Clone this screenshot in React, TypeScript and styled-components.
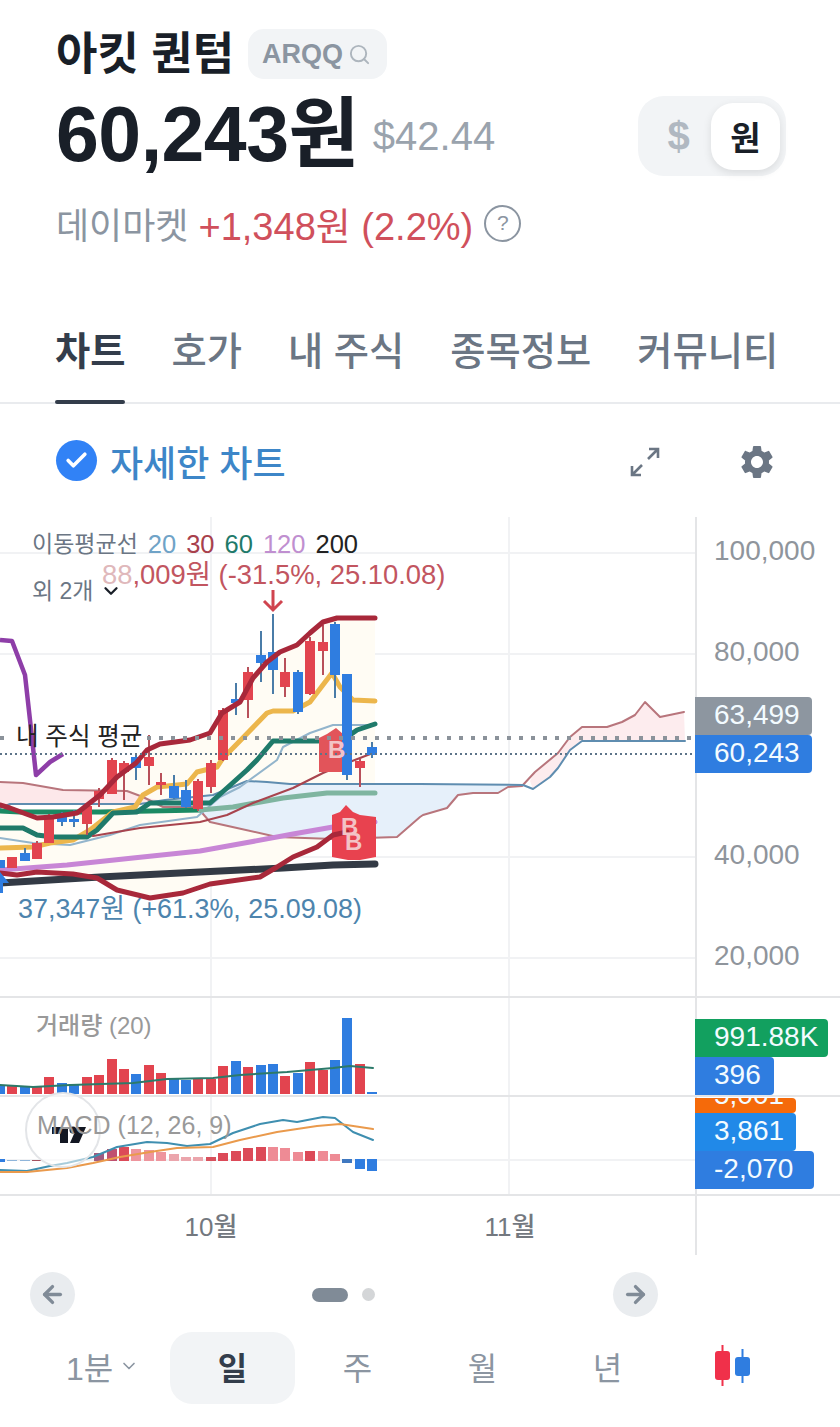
import * as React from 'react';
import styled, { createGlobalStyle } from 'styled-components';
import { ArrowLeft, ArrowRight, Check, ChevronDown, Search } from 'lucide-react';
import { MdSettings } from 'react-icons/md';

const sans = `'Liberation Sans', 'Noto Sans CJK KR', sans-serif`;
const RED = '#e2444f';
const BLUE = '#2f7de0';

const GlobalStyle = createGlobalStyle`
  html, body {
    margin: 0;
    padding: 0;
    background: #fff;
    font-family: ${sans};
  }
`;

const Page = styled.div`
  width: 840px;
  height: 1427px;
  overflow: hidden;
  background: #fff;
`;

const Header = styled.header`
  height: 276px;
  padding: 27px 54px 0 56px;
  box-sizing: border-box;
`;

const TitleRow = styled.div`
  display: flex;
  align-items: center;
  gap: 14px;
  height: 54px;
`;

const Title = styled.h1`
  margin: 2px 0 0;
  font-size: 45px;
  font-weight: 700;
  line-height: 54px;
  color: #191f28;
`;

const TickerPill = styled.div`
  display: flex;
  align-items: center;
  gap: 5px;
  height: 50px;
  padding: 0 16px 0 14px;
  border-radius: 16px;
  background: #f2f4f6;
  color: #8b95a1;
  font-size: 27px;
  font-weight: 700;
  svg {
    color: #adb5bd;
  }
`;

const PriceRow = styled.div`
  display: flex;
  align-items: center;
  height: 80px;
  margin-top: 15px;
`;

const Price = styled.div`
  font-size: 77px;
  font-weight: 700;
  letter-spacing: -0.5px;
  line-height: 80px;
  color: #191f28;
  margin: 0 14px 4px 0;
`;

const UsdPrice = styled.div`
  font-size: 40px;
  color: #9aa3ad;
`;

const CurrencyToggle = styled.div`
  display: flex;
  align-items: center;
  margin-left: auto;
  width: 148px;
  height: 80px;
  padding: 0 6px 0 8px;
  box-sizing: border-box;
  border-radius: 26px;
  background: #f2f4f6;
`;

const CurrencyOption = styled.div<{ $active?: boolean }>`
  display: flex;
  align-items: center;
  justify-content: center;
  width: ${(p) => (p.$active ? '69px' : '65px')};
  height: 67px;
  border-radius: 22px;
  font-weight: 700;
  font-size: ${(p) => (p.$active ? '33px' : '40px')};
  color: ${(p) => (p.$active ? '#191f28' : '#b0b8c1')};
  background: ${(p) => (p.$active ? '#fff' : 'transparent')};
  box-shadow: ${(p) => (p.$active ? '0 3px 8px rgba(0,0,0,0.10)' : 'none')};
`;

const ChangeRow = styled.div`
  display: flex;
  align-items: center;
  height: 40px;
  margin-top: 27px;
  font-size: 36px;
`;

const MarketName = styled.span`
  color: #8b95a1;
  margin-right: 10px;
`;

const ChangeValue = styled.span`
  color: #d0505c;
  font-size: 38px;
  margin-right: 11px;
`;

const HelpBadge = styled.span`
  display: flex;
  align-items: center;
  justify-content: center;
  width: 37px;
  height: 37px;
  box-sizing: border-box;
  border: 2.5px solid #8b95a1;
  border-radius: 50%;
  font-size: 21px;
  color: #8b95a1;
`;

const Tabs = styled.nav`
  display: flex;
  gap: 46px;
  height: 128px;
  padding: 0 0 0 55px;
  box-sizing: border-box;
  border-bottom: 2px solid #e9ebee;
`;

const Tab = styled.div<{ $active?: boolean }>`
  position: relative;
  display: flex;
  align-items: center;
  height: 126px;
  padding-top: 18px;
  box-sizing: border-box;
  font-size: 38.3px;
  font-weight: ${(p) => (p.$active ? 700 : 500)};
  color: ${(p) => (p.$active ? '#333d4b' : '#6b7684')};
  white-space: nowrap;
  &::after {
    content: '';
    display: ${(p) => (p.$active ? 'block' : 'none')};
    position: absolute;
    left: 0;
    right: 0;
    bottom: -2px;
    height: 4px;
    border-radius: 2px;
    background: #333d4b;
  }
`;

const Toolbar = styled.div`
  display: flex;
  align-items: center;
  height: 113px;
  padding: 0 63px 0 56px;
  box-sizing: border-box;
`;

const CheckBadge = styled.span`
  display: flex;
  align-items: center;
  justify-content: center;
  width: 41px;
  height: 41px;
  border-radius: 50%;
  background: #3182f6;
  color: #fff;
  margin-right: 13px;
`;

const ToolbarLabel = styled.span`
  font-size: 36px;
  font-weight: 500;
  color: #3d86c8;
`;

const ToolbarIcons = styled.div`
  display: flex;
  align-items: center;
  gap: 77px;
  margin-left: auto;
  padding-top: 2px;
  color: #6b7684;
`;

const Chart = styled.section`
  position: relative;
  height: 738px;
`;

const ChartSvg = styled.svg`
  display: block;
`;

const LegendRow = styled.div`
  position: absolute;
  left: 32px;
  top: 12px;
  display: flex;
  align-items: center;
  gap: 10px;
  font-size: 23px;
  line-height: 30px;
  color: #6b7684;
`;

const LegendValue = styled.span<{ $color: string }>`
  color: ${(p) => p.$color};
  font-size: 25.5px;
`;

const LegendMore = styled.div`
  position: absolute;
  left: 32px;
  top: 59px;
  display: flex;
  align-items: center;
  gap: 6px;
  font-size: 23px;
  line-height: 30px;
  color: #6b7684;
  svg {
    color: #191f28;
  }
`;

const HighLabel = styled.div`
  position: absolute;
  left: 102px;
  top: 42px;
  font-size: 27.4px;
  line-height: 32px;
  color: #c25560;
  white-space: nowrap;
`;

const FadedDigits = styled.span`
  color: #dfb8bb;
`;

const LowLabel = styled.div`
  position: absolute;
  left: 18px;
  top: 376px;
  font-size: 26.9px;
  line-height: 32px;
  color: #4d84ad;
  white-space: nowrap;
`;

const AverageLabel = styled.div`
  position: absolute;
  left: 16px;
  top: 205px;
  font-size: 24.5px;
  line-height: 30px;
  color: #222;
  white-space: nowrap;
`;

const BuyMark = styled.span<{ $left: number; $top: number }>`
  position: absolute;
  left: ${(p) => p.$left}px;
  top: ${(p) => p.$top}px;
  font-size: 24px;
  font-weight: 700;
  line-height: 28px;
  color: #f3c3c6;
`;

const PaneTitle = styled.div<{ $top: number; $left: number; $size: number }>`
  position: absolute;
  left: ${(p) => p.$left}px;
  top: ${(p) => p.$top}px;
  font-size: ${(p) => p.$size}px;
  line-height: 28px;
  font-weight: 500;
  color: #999;
  white-space: nowrap;
`;

const AxisLabel = styled.div<{ $top: number }>`
  position: absolute;
  left: 714px;
  top: ${(p) => p.$top}px;
  font-size: 28px;
  line-height: 34px;
  color: #8f959c;
`;

const PriceTag = styled.div<{ $top: number; $width: number; $height?: number; $bg: string }>`
  position: absolute;
  left: 695px;
  top: ${(p) => p.$top}px;
  width: ${(p) => p.$width}px;
  height: ${(p) => p.$height ?? 38}px;
  padding-left: 19px;
  box-sizing: border-box;
  overflow: hidden;
  border-radius: 0 4px 4px 0;
  background: ${(p) => p.$bg};
  color: #f3fbff;
  font-size: 28px;
  line-height: 36px;
`;

const ClippedValue = styled.div`
  margin-top: -21px;
`;

const DateLabel = styled.div<{ $left: number }>`
  position: absolute;
  left: ${(p) => p.$left}px;
  top: 694px;
  width: 80px;
  margin-left: -40px;
  text-align: center;
  font-size: 26px;
  line-height: 32px;
  font-weight: 500;
  color: #73787f;
`;

const PagerRow = styled.div`
  display: flex;
  align-items: center;
  justify-content: space-between;
  width: 628px;
  height: 77px;
  padding-top: 2px;
  box-sizing: border-box;
  margin-left: 30px;
`;

const PagerButton = styled.span`
  display: flex;
  align-items: center;
  justify-content: center;
  width: 45px;
  height: 45px;
  border-radius: 50%;
  background: #e9ecef;
  color: #808b97;
`;

const PagerDots = styled.div`
  display: flex;
  align-items: center;
  gap: 14px;
  margin-right: 2px;
`;

const PagerDot = styled.span<{ $active?: boolean }>`
  width: ${(p) => (p.$active ? '36px' : '13px')};
  height: ${(p) => (p.$active ? '14px' : '13px')};
  border-radius: 7px;
  background: ${(p) => (p.$active ? '#808b97' : '#d4d6d8')};
`;

const PeriodRow = styled.div`
  display: grid;
  grid-template-columns: repeat(6, 125px);
  height: 72px;
  padding-left: 45px;
`;

const PeriodButton = styled.div<{ $active?: boolean; $shift?: number }>`
  display: flex;
  align-items: center;
  justify-content: center;
  gap: 6px;
  padding: 0 ${(p) => p.$shift ?? 0}px 4px 0;
  border-radius: 22px;
  font-size: 32px;
  font-weight: ${(p) => (p.$active ? 700 : 400)};
  color: ${(p) => (p.$active ? '#333d4b' : '#8b95a1')};
  background: ${(p) => (p.$active ? '#f2f4f6' : 'transparent')};
`;

type Candle = [number, number, number, number, number, 'r' | 'b'];

// x, body top, body bottom, wick top, wick bottom, colour
const candles: Candle[] = [
  [0, 860, 868, 860, 868, 'b'],
  [12, 857, 868, 857, 868, 'r'],
  [25, 853, 861, 848, 861, 'b'],
  [37, 843, 859, 841, 859, 'r'],
  [49, 816, 843, 814, 843, 'r'],
  [62, 817, 822, 812, 826, 'b'],
  [74, 819, 822, 810, 827, 'b'],
  [87, 806, 824, 803, 835, 'r'],
  [99, 791, 799, 788, 807, 'r'],
  [112, 760, 794, 758, 794, 'r'],
  [124, 763, 772, 761, 800, 'r'],
  [136, 757, 768, 754, 780, 'b'],
  [149, 757, 766, 735, 785, 'r'],
  [161, 782, 785, 773, 795, 'r'],
  [174, 786, 798, 775, 799, 'b'],
  [186, 790, 807, 780, 808, 'b'],
  [198, 781, 809, 779, 811, 'r'],
  [211, 763, 787, 760, 793, 'r'],
  [223, 710, 760, 708, 761, 'r'],
  [236, 699, 703, 683, 715, 'b'],
  [248, 672, 700, 667, 718, 'r'],
  [261, 655, 663, 631, 682, 'b'],
  [273, 652, 670, 614, 694, 'b'],
  [285, 672, 687, 658, 697, 'r'],
  [298, 672, 712, 670, 714, 'b'],
  [310, 641, 694, 637, 695, 'r'],
  [323, 642, 651, 625, 675, 'r'],
  [335, 624, 675, 622, 698, 'b'],
  [347, 674, 775, 674, 780, 'b'],
  [360, 761, 768, 759, 787, 'r'],
  [372, 747, 755, 742, 758, 'b'],
];

// x, top
const volumes: [number, number, 'r' | 'b'][] = [
  [0, 1085, 'b'], [12, 1086, 'r'], [25, 1086, 'b'], [37, 1087, 'r'], [49, 1077, 'r'], [62, 1083, 'b'],
  [74, 1084, 'b'], [87, 1077, 'r'], [99, 1075, 'r'], [112, 1059, 'r'], [124, 1069, 'r'], [136, 1074, 'b'],
  [149, 1065, 'r'], [161, 1073, 'r'], [174, 1079, 'b'], [186, 1080, 'b'], [198, 1079, 'r'], [211, 1079, 'r'],
  [223, 1066, 'r'], [236, 1061, 'b'], [248, 1067, 'r'], [261, 1065, 'b'], [273, 1064, 'b'], [285, 1076, 'r'],
  [298, 1073, 'b'], [310, 1062, 'r'], [323, 1070, 'r'], [335, 1060, 'b'], [347, 1018, 'b'], [360, 1064, 'r'],
  [372, 1092, 'b'],
];

// x, top, bottom, colour
const macdBars: [number, number, number, string][] = [
  [0, 1159, 1162, '#2f7de0'], [12, 1160, 1161, '#8fb5da'], [25, 1160, 1161, '#8fb5da'], [37, 1160, 1161, '#a5525f'],
  [99, 1153, 1161, '#a05a80'], [112, 1149, 1161, '#c05070'], [124, 1147, 1161, '#dc4a58'], [136, 1149, 1161, '#ee959d'],
  [149, 1150, 1161, '#ee959d'], [161, 1152, 1161, '#ee959d'], [174, 1154, 1161, '#eba5ac'], [186, 1157, 1161, '#eba5ac'],
  [198, 1157, 1161, '#eba5ac'], [211, 1157, 1161, '#d8505c'], [223, 1153, 1161, '#dc4a58'], [236, 1151, 1161, '#dc4a58'],
  [248, 1148, 1161, '#dc4a58'], [261, 1147, 1161, '#dc4a58'], [273, 1147, 1161, '#ee8b95'], [285, 1148, 1161, '#ee8b95'],
  [298, 1152, 1161, '#ee8b95'], [310, 1151, 1161, '#dc4a58'], [323, 1151, 1161, '#ee8b95'], [335, 1154, 1161, '#ee8b95'],
  [347, 1159, 1163, '#3f78c0'], [360, 1159, 1169, BLUE], [372, 1159, 1171, BLUE],
];

const crimsonUpper = '0,805 10,808 37,818 53,817 77,813 100,795 117,777 136,763 147,750 160,744 190,740 210,733 222,713 240,702 253,678 267,662 280,652 297,645 310,633 323,622 337,618 375,618';
const crimsonLower = '0,873 17,875 37,872 73,874 97,878 117,890 150,898 183,893 210,884 260,877 277,867 293,857 317,847 333,835 347,832';
const crimsonThin = '93,836 140,828 200,822 227,815 253,803 293,788 323,773 347,763 373,753';
const blackLine = '0,883 100,877 200,872 283,868 333,865 375,864';
const violetLine = '0,870 67,865 133,858 200,851 250,842 293,834 333,827 375,822';
const yellowLine = '0,848 33,847 50,843 73,840 90,830 113,812 135,807 143,795 157,787 187,784 197,772 217,767 223,758 233,748 267,713 273,711 293,711 310,702 332,673 340,687 353,700 375,701';
const tealLine = '0,828 23,828 37,835 53,837 87,837 97,830 113,813 137,812 150,803 210,803 227,788 247,770 257,760 273,741 317,741 343,740 357,730 375,724';
const greenLine = '0,811 20,812 100,812 200,810';
const paleGreenLine = '200,810 233,807 283,798 327,793 375,793';
const cloudBlue = '0,808 10,804 140,804 165,800 213,795 247,781 267,782 290,784 420,784 523,785 533,789 550,777 558,768 570,750 582,741 685,741';
const skyLine = '0,838 33,843 70,845 110,835 140,825 197,817 220,797 240,787 277,760 283,747 310,733 333,725 367,725';
const cloudPink = '0,782 23,783 63,790 127,791 143,797 163,807 197,807 210,822 237,828 277,837 333,839 397,837 420,817 423,815 447,808 458,795 473,793 498,793 508,787 522,786 535,772 558,753 570,737 582,727 607,727 622,722 635,715 645,702 660,717 684,712';

const volumeAverage = '0,1085 33,1087 70,1085 133,1083 167,1079 213,1078 240,1075 287,1072 333,1068 350,1066 373,1068';
const macdLine = '0,1170 27,1171 50,1166 67,1163 93,1157 117,1147 147,1142 167,1143 187,1146 210,1144 233,1133 260,1124 283,1120 297,1122 323,1117 335,1118 353,1132 373,1140';
const signalLine = '0,1172 27,1172 67,1168 93,1163 120,1157 150,1152 177,1148 213,1147 240,1140 277,1132 317,1126 340,1124 373,1129';

function Line({ points, color, width = 2 }: { points: string; color: string; width?: number }) {
  return (
    <polyline
      points={points}
      fill='none'
      stroke={color}
      strokeWidth={width}
      strokeLinecap='round'
      strokeLinejoin='round'
    />
  );
}

function ChartDrawing() {
  return (
    <ChartSvg width={840} height={738} viewBox='0 517 840 738'>
      {/* grid */}
      {[553, 654, 857, 958].map((y) => (
        <line key={y} x1={0} x2={696} y1={y} y2={y} stroke='#f1f2f4' strokeWidth={2} />
      ))}
      <line x1={0} x2={696} y1={1160} y2={1160} stroke='#f1f2f4' strokeWidth={2} />
      {[211, 509].map((x) => (
        <line key={x} x1={x} x2={x} y1={517} y2={1195} stroke='#f1f2f4' strokeWidth={2} />
      ))}
      {[997, 1096, 1195].map((y) => (
        <line key={y} x1={0} x2={840} y1={y} y2={y} stroke='#e4e5e7' strokeWidth={2} />
      ))}
      <line x1={696} x2={696} y1={517} y2={1255} stroke='#e4e5e7' strokeWidth={2} />

      {/* band and cloud fills */}
      <polygon points={`${crimsonUpper} 375,864 347,832 ${crimsonLower.split(' ').reverse().join(' ')}`} fill='#fffcf4' />
      <polygon points='0,782 23,783 63,790 127,791 143,797 163,801 140,804 10,804 0,808' fill='#fde8ea' />
      <polygon points='200,796 213,795 247,781 267,782 290,784 523,785 508,787 498,793 473,793 458,795 447,808 423,815 420,817 397,837 333,839 277,837 237,828 210,822 197,807' fill='#e6f0fa' />
      <polygon points='530,781 535,772 558,753 570,737 582,727 607,727 622,722 635,715 645,702 660,717 684,712 685,741 582,741 570,750 558,768 550,777 533,789' fill='#fdecee' />

      {/* indicator lines */}
      <Line points={cloudPink} color='#b8757c' />
      <Line points={cloudBlue} color='#5f8db0' />
      <Line points={skyLine} color='#93b5cc' />
      <Line points={blackLine} color='#333a45' width={7} />
      <Line points={violetLine} color='#c886d6' width={5} />
      <Line points={greenLine} color='#1b8a63' width={5} />
      <Line points={paleGreenLine} color='#7fb5a0' width={5} />
      <Line points={yellowLine} color='#ecb64c' width={5} />
      <Line points={tealLine} color='#1f7a6a' width={5} />
      <Line points={crimsonThin} color='#a8444e' />
      <polyline points='0,640 12,641 25,675 30,720 36,775 50,762 63,754' fill='none' stroke='#8e3ea8' strokeWidth={4.5} strokeLinejoin='round' />

      {/* buy markers */}
      <path d='M319 772V738l8-4 9-6 7 6V772Z' fill='#e2545a' />
      <path d='M332 857V815l8-3 6-7 7 7 7 3 16 2V857l-16 3h-12Z' fill='#e8424f' />

      {/* candles */}
      {candles.map(([x, top, bottom, wickTop, wickBottom, side]) => {
        const color = side === 'r' ? RED : BLUE;
        return (
          <g key={x}>
            <line x1={x} x2={x} y1={wickTop} y2={wickBottom} stroke={side === 'r' ? '#b8505a' : '#4a7ca8'} strokeWidth={2} />
            <rect x={x - 5} y={top} width={10} height={bottom - top} fill={color} />
          </g>
        );
      })}

      <Line points={crimsonUpper} color='#a8283a' width={5} />
      <Line points={crimsonLower} color='#a8283a' width={5} />

      {/* price lines, the average line stops behind its label */}
      <line x1={0} x2={8} y1={738} y2={738} stroke='#8b929a' strokeWidth={4} strokeDasharray='4 8' />
      <line x1={147} x2={696} y1={738} y2={738} stroke='#8b929a' strokeWidth={4} strokeDasharray='4 8' />
      <line x1={0} x2={694} y1={754} y2={754} stroke='#5d7489' strokeWidth={2} strokeDasharray='2 3' />

      {/* high and low arrows */}
      <path d='M273 590V609M264 601l9 9 9-9' fill='none' stroke='#d0444f' strokeWidth={3} />
      <path d='M0 872l9 11H3V893H0Z' fill='#2f7de0' />

      {/* volume pane */}
      {volumes.map(([x, top, side]) => (
        <rect key={x} x={x - 5} y={top} width={10} height={1094 - top} fill={side === 'r' ? RED : BLUE} />
      ))}
      <Line points={volumeAverage} color='#2c7a6a' />

      {/* macd pane */}
      {macdBars.map(([x, top, bottom, color]) => (
        <rect key={x} x={x - 5} y={top} width={10} height={bottom - top} fill={color} />
      ))}
      <Line points={macdLine} color='#3f8fb0' />
      <Line points={signalLine} color='#ea9a4c' />

      {/* watermark logo */}
      <circle cx={63} cy={1130} r={37} fill='rgba(255,255,255,0.55)' stroke='#e3e5e8' strokeWidth={2} />
      <path d='M52 1127H68V1143H60V1134H52Z' fill='#131722' />
      <circle cx={73} cy={1130} r={3.5} fill='#131722' />
      <path d='M77 1127H86L79 1143H70Z' fill='#131722' />
    </ChartSvg>
  );
}

function ExpandIcon() {
  return (
    <svg width={30} height={30} viewBox='0 0 30 30' fill='none' stroke='#6b7684' strokeWidth={2.6}>
      <path d='M18 12 28 2M19 2H28V11' />
      <path d='M12 18 2 28M2 19V28H11' />
    </svg>
  );
}

function CandleIcon() {
  return (
    <svg width={38} height={42} viewBox='0 0 38 42'>
      <rect x={7.5} y={0} width={2} height={41} fill='#f0304a' />
      <rect x={1} y={6} width={15} height={29} rx={3} fill='#f0304a' />
      <rect x={27.5} y={4} width={2} height={34} fill='#2f7de0' />
      <rect x={21} y={12} width={15} height={19} rx={3} fill='#2f7de0' />
    </svg>
  );
}

export default function App() {
  return (
    <Page>
      <GlobalStyle />
      <Header>
        <TitleRow>
          <Title>아킷 퀀텀</Title>
          <TickerPill>
            ARQQ
            <Search size={23} strokeWidth={2} />
          </TickerPill>
        </TitleRow>
        <PriceRow>
          <Price>60,243원</Price>
          <UsdPrice>$42.44</UsdPrice>
          <CurrencyToggle>
            <CurrencyOption>$</CurrencyOption>
            <CurrencyOption $active>원</CurrencyOption>
          </CurrencyToggle>
        </PriceRow>
        <ChangeRow>
          <MarketName>데이마켓</MarketName>
          <ChangeValue>+1,348원 (2.2%)</ChangeValue>
          <HelpBadge>?</HelpBadge>
        </ChangeRow>
      </Header>

      <Tabs>
        <Tab $active>차트</Tab>
        <Tab>호가</Tab>
        <Tab>내 주식</Tab>
        <Tab>종목정보</Tab>
        <Tab>커뮤니티</Tab>
      </Tabs>

      <Toolbar>
        <CheckBadge>
          <Check size={25} strokeWidth={3.5} />
        </CheckBadge>
        <ToolbarLabel>자세한 차트</ToolbarLabel>
        <ToolbarIcons>
          <ExpandIcon />
          <MdSettings size={40} />
        </ToolbarIcons>
      </Toolbar>

      <Chart>
        <ChartDrawing />

        <LegendRow>
          <span>이동평균선</span>
          <LegendValue $color='#6fa3c7'>20</LegendValue>
          <LegendValue $color='#a8404c'>30</LegendValue>
          <LegendValue $color='#1f7a6a'>60</LegendValue>
          <LegendValue $color='#c08fd0'>120</LegendValue>
          <LegendValue $color='#222'>200</LegendValue>
        </LegendRow>
        <LegendMore>
          외 2개
          <ChevronDown size={22} strokeWidth={2.5} />
        </LegendMore>
        <HighLabel>
          <FadedDigits>88</FadedDigits>,009원 (-31.5%, 25.10.08)
        </HighLabel>
        <AverageLabel>내 주식 평균</AverageLabel>
        <LowLabel>37,347원 (+61.3%, 25.09.08)</LowLabel>
        <BuyMark $left={328} $top={219}>B</BuyMark>
        <BuyMark $left={341} $top={296}>B</BuyMark>
        <BuyMark $left={345} $top={311}>B</BuyMark>

        <AxisLabel $top={17}>100,000</AxisLabel>
        <AxisLabel $top={118}>80,000</AxisLabel>
        <AxisLabel $top={321}>40,000</AxisLabel>
        <AxisLabel $top={422}>20,000</AxisLabel>

        <PriceTag $top={180} $width={117} $bg='#8d96a0'>63,499</PriceTag>
        <PriceTag $top={218} $width={117} $bg={BLUE}>60,243</PriceTag>

        <PaneTitle $left={36} $top={495} $size={24}>거래량 (20)</PaneTitle>
        <PaneTitle $left={37} $top={594} $size={25}>MACD (12, 26, 9)</PaneTitle>

        <PriceTag $top={502} $width={133} $bg='#12a05f'>991.88K</PriceTag>
        <PriceTag $top={540} $width={79} $bg={BLUE}>396</PriceTag>
        <PriceTag $top={581} $width={101} $height={15} $bg='#f56a0a'>
          <ClippedValue>5,001</ClippedValue>
        </PriceTag>
        <PriceTag $top={596} $width={101} $bg='#2189e8'>3,861</PriceTag>
        <PriceTag $top={634} $width={119} $bg={BLUE}>-2,070</PriceTag>

        <DateLabel $left={211}>10월</DateLabel>
        <DateLabel $left={510}>11월</DateLabel>
      </Chart>

      <PagerRow>
        <PagerButton>
          <ArrowLeft size={27} strokeWidth={3} />
        </PagerButton>
        <PagerDots>
          <PagerDot $active />
          <PagerDot />
        </PagerDots>
        <PagerButton>
          <ArrowRight size={27} strokeWidth={3} />
        </PagerButton>
      </PagerRow>

      <PeriodRow>
        <PeriodButton $shift={10}>
          1분
          <ChevronDown size={20} strokeWidth={2} />
        </PeriodButton>
        <PeriodButton $active>일</PeriodButton>
        <PeriodButton>주</PeriodButton>
        <PeriodButton>월</PeriodButton>
        <PeriodButton>년</PeriodButton>
        <PeriodButton>
          <CandleIcon />
        </PeriodButton>
      </PeriodRow>
    </Page>
  );
}
